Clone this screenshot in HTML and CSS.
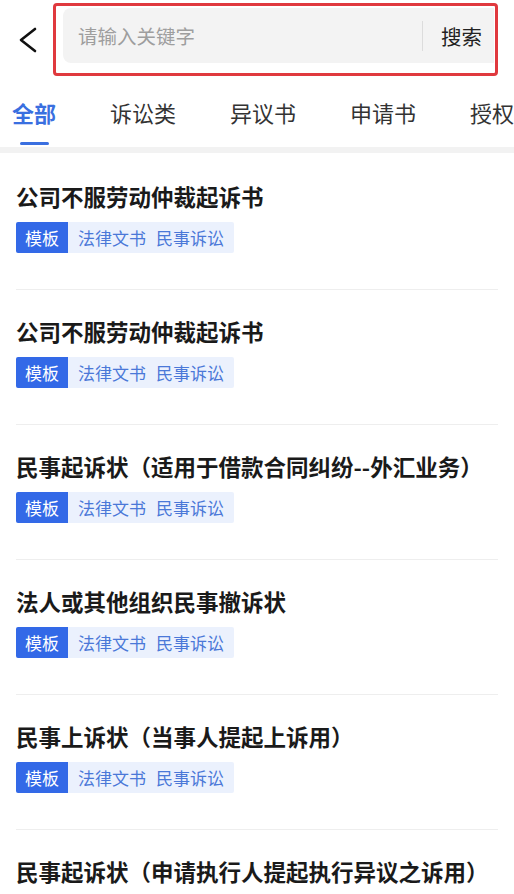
FILE: index.html
```html
<!DOCTYPE html>
<html lang="zh-CN">
<head>
  <meta charset="UTF-8">
  <meta name="viewport" content="width=device-width, initial-scale=1.0">
  <title>文书搜索</title>
  <link rel="stylesheet" href="styles.css">
</head>
<body>
  <header class="top">
    <a class="back" href="#">
      <svg width="24" height="28" viewBox="0 0 24 28"><path d="M19 3 L5 14 L19 25" fill="none" stroke="#111" stroke-width="2.6" stroke-linecap="round" stroke-linejoin="round"/></svg>
    </a>
    <div class="search-box">
      <div class="search">
        <input class="search-input" type="text" placeholder="请输入关键字">
        <span class="search-sep"></span>
        <button class="search-btn" type="button">搜索</button>
      </div>
    </div>
  </header>

  <nav class="tabs">
    <div class="tab active"><span>全部</span><i class="tab-bar"></i></div>
    <div class="tab"><span>诉讼类</span><i class="tab-bar"></i></div>
    <div class="tab"><span>异议书</span><i class="tab-bar"></i></div>
    <div class="tab"><span>申请书</span><i class="tab-bar"></i></div>
    <div class="tab"><span>授权</span><i class="tab-bar"></i></div>
  </nav>

  <ul class="doc-list">
    <li class="doc">
      <h3 class="doc-title">公司不服劳动仲裁起诉书</h3>
      <div class="tags"><span class="tag-type">模板</span><span class="tag-cats"><span>法律文书</span><span>民事诉讼</span></span></div>
    </li>
    <li class="doc">
      <h3 class="doc-title">公司不服劳动仲裁起诉书</h3>
      <div class="tags"><span class="tag-type">模板</span><span class="tag-cats"><span>法律文书</span><span>民事诉讼</span></span></div>
    </li>
    <li class="doc">
      <h3 class="doc-title">民事起诉状（适用于借款合同纠纷--外汇业务）</h3>
      <div class="tags"><span class="tag-type">模板</span><span class="tag-cats"><span>法律文书</span><span>民事诉讼</span></span></div>
    </li>
    <li class="doc">
      <h3 class="doc-title">法人或其他组织民事撤诉状</h3>
      <div class="tags"><span class="tag-type">模板</span><span class="tag-cats"><span>法律文书</span><span>民事诉讼</span></span></div>
    </li>
    <li class="doc">
      <h3 class="doc-title">民事上诉状（当事人提起上诉用）</h3>
      <div class="tags"><span class="tag-type">模板</span><span class="tag-cats"><span>法律文书</span><span>民事诉讼</span></span></div>
    </li>
    <li class="doc">
      <h3 class="doc-title">民事起诉状（申请执行人提起执行异议之诉用）</h3>
    </li>
  </ul>
</body>
</html>
```

FILE: styles.css
```css
* { box-sizing: border-box; }
body { margin: 0; font-family: "Noto Sans CJK SC", "Noto Sans", sans-serif; color: #222; background: #fff; overflow: hidden; }

.top { display: flex; align-items: center; height: 76px; padding: 3px 16px 0 16px; }
.back { display: flex; width: 24px; height: 28px; margin-right: 13px; }
.search-box { flex: 1; height: 73px; border: 3px solid #e0393e; border-radius: 4px; padding: 2px 1px 10px 7px; }
.search { display: flex; align-items: center; height: 100%; background: #f3f3f3; border-radius: 8px 0 0 8px; }
.search-input { flex: 1; min-width: 0; height: 100%; border: 0; outline: 0; background: transparent; padding: 0 0 0 15px; font-family: inherit; font-size: 19.5px; color: #222; }
.search-input::placeholder { color: #9e9e9e; }
.search-sep { width: 1px; height: 30px; background: #dcdcdc; }
.search-btn { border: 0; background: transparent; padding: 0 12px 0 18px; font-family: inherit; font-size: 20.5px; color: #222; }

.tabs { display: flex; gap: 54px; height: 77px; padding: 21px 0 0 12px; border-bottom: 6px solid #f2f2f2; white-space: nowrap; overflow: hidden; }
.tab { display: flex; flex-direction: column; align-items: center; flex-shrink: 0; font-size: 22px; line-height: 30px; color: #333; }
.tab-bar { width: 29px; height: 3px; margin-top: 15px; border-radius: 2px; }
.tab.active { color: #3a6fe0; font-weight: bold; }
.tab.active .tab-bar { background: #3a6fe0; }

.doc-list { list-style: none; margin: 0; padding: 2px 0 0; }
.doc { margin: 0 16px; padding: 26px 0 36px; border-bottom: 1px solid #eeeeee; }
.doc-title { margin: 0 0 11px; font-size: 22.5px; line-height: 30px; font-weight: bold; color: #1a1a1a; white-space: nowrap; }
.tags { display: flex; height: 31px; font-size: 17px; line-height: 31px; }
.tag-type { padding: 0 9px; background: #3369e7; color: #fff; border-radius: 2px 0 0 2px; }
.tag-cats { display: flex; gap: 10px; padding: 0 10px; background: #ebf1fd; color: #4a78d8; border-radius: 0 2px 2px 0; }
```
